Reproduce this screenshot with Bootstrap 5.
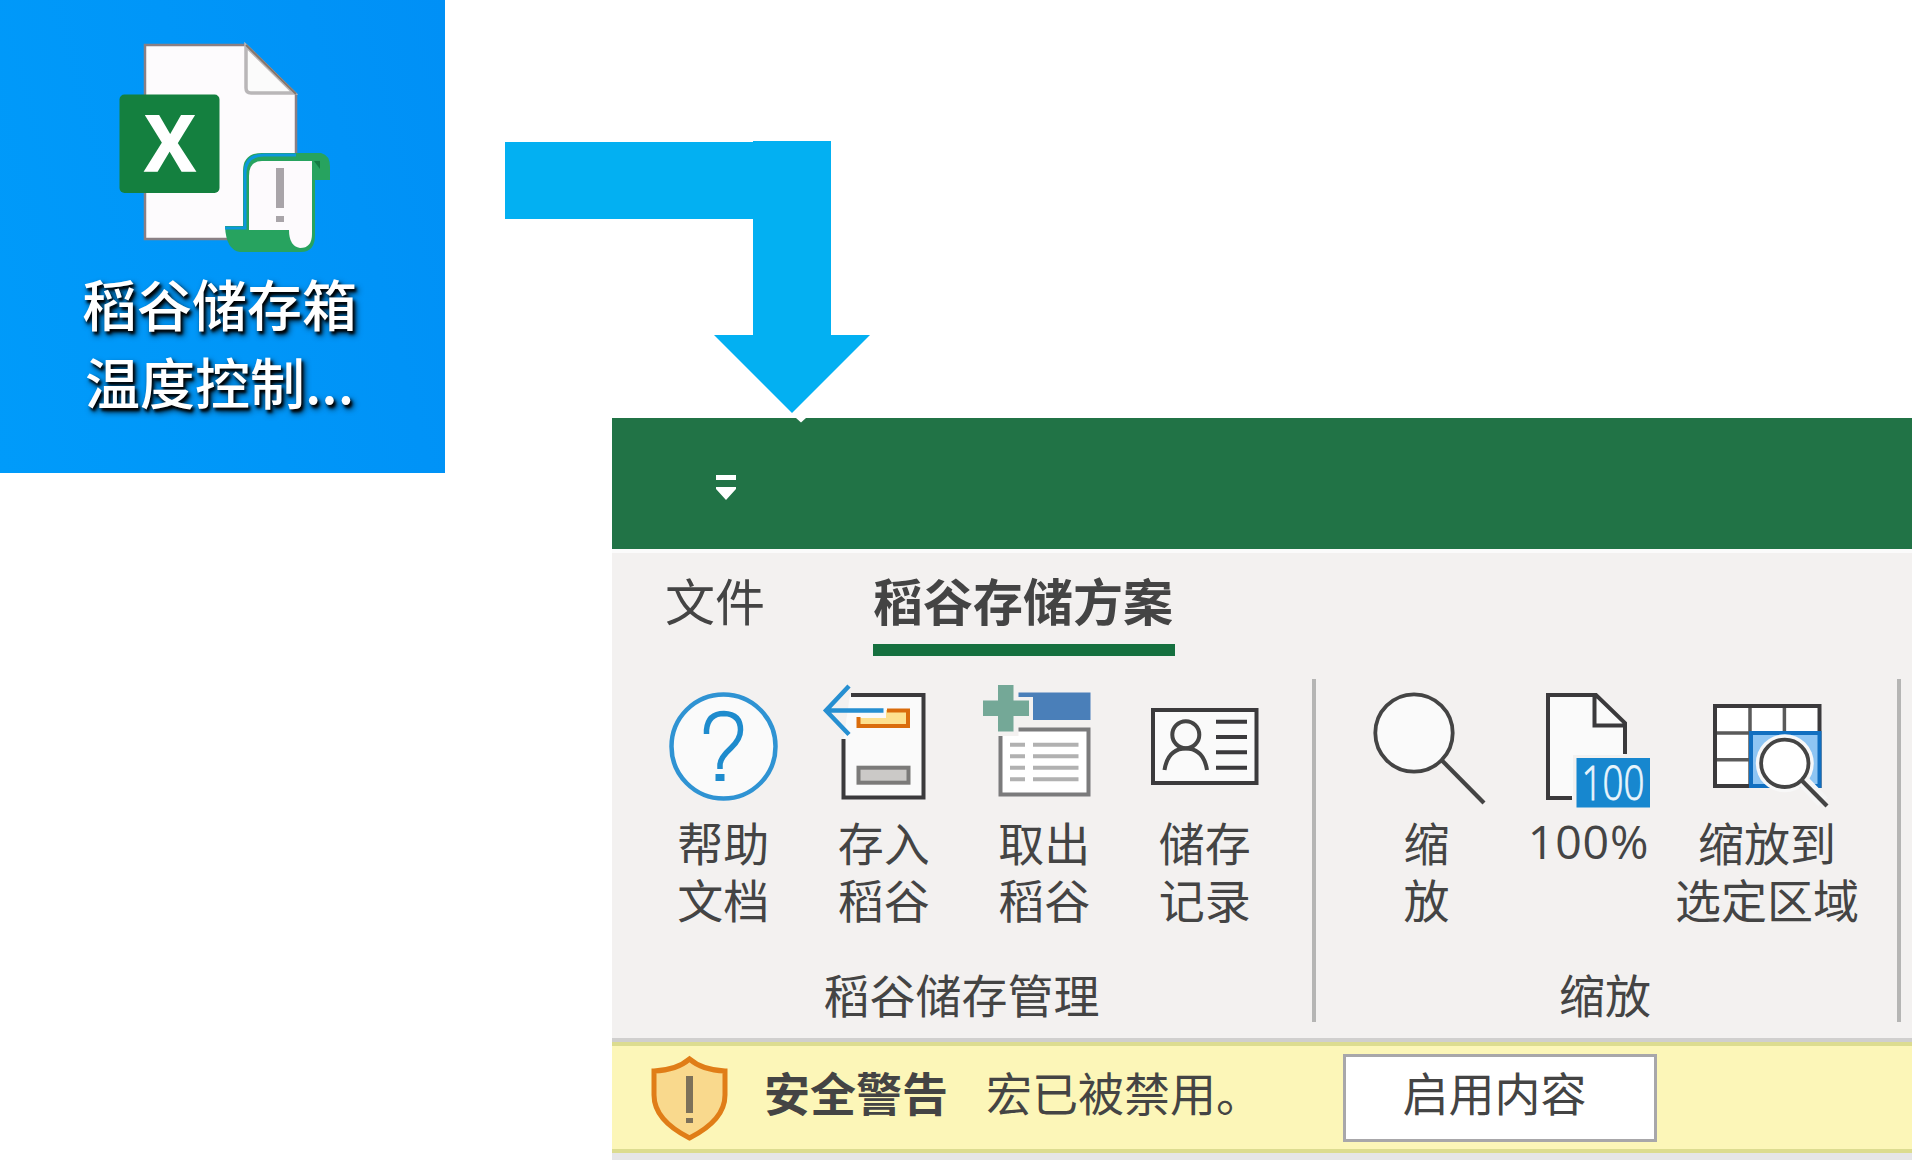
<!DOCTYPE html>
<html lang="zh-CN">
<head>
<meta charset="utf-8">
<title>稻谷存储方案</title>
<link rel="stylesheet" href="https://cdn.jsdelivr.net/npm/bootstrap@5.3.0/dist/css/bootstrap.min.css">
<style>
body{width:1915px;height:1164px;background:#fff;font-family:"Noto Sans CJK SC",sans-serif;color:#444}
.desk-tile{width:445px;height:473px;background:linear-gradient(75deg,#009bfa,#0096f8 50%,#0090f6);padding-top:30px}
.desk-name{font-size:55px;line-height:78px;font-weight:500;color:#fff;margin-top:-7px;padding-right:6px;text-shadow:2px 3px 3px #000,3px 4px 6px rgba(0,0,0,.8)}
.arrow-art{margin:141px 0 0 60px}
.app-win{width:1300px;height:742px;margin:-55px 0 0 612px;background:#f3f1f0}
.app-title{height:131px;background:#217346;padding:57px 0 0 103px;position:relative}
.app-notch{position:absolute;left:183px;top:0}
.tab-strip{height:126px;border-top:4px solid #fbfbfb;padding-left:53px}
.tab-item{font-size:50px;line-height:60px;height:103px;padding-top:16px}
.tab-gap{margin-left:108px;width:302px}
.tab-on{font-weight:700;border-bottom:12px solid #15703f;white-space:nowrap}
.rib{height:367px}
.grp{height:343px;margin-top:4px}
.grp-a{width:700px;padding-left:31px}
.grp-b{width:581px;padding-left:29px}
.rule-v{width:4px;height:343px;margin-top:4px;background:#b5b5b4}
.rib-btn{font-size:46px;line-height:57px;height:261px;width:160.5px;padding-top:1px;color:#444;white-space:nowrap}
.rib-btn svg,.desk-tile svg,.msg-bar svg{overflow:visible}
.rib-btn svg{margin-bottom:3px}
.w-z{width:163px}.w-s{width:192px}
.grp-name{font-size:46px;line-height:57px;margin-top:25px}
.pct{font-family:"Open Sans","Noto Sans",sans-serif;font-size:46.5px;letter-spacing:.8px;padding-right:2px}
.msg-bar{height:111px;border-top:4px solid #dcdc90;border-bottom:4px solid #dcdc90;background:#fcf6b8;box-shadow:0 -4px 0 #d0cfce;font-size:46px;line-height:57px;padding-left:39px}
.msg-b{margin-left:36px;padding-bottom:13px;font-weight:700}
.msg-t{margin-left:38px;padding-bottom:13px;width:357px}
.msg-btn{width:314px;height:88px;border:3px solid #a8a7aa;font-size:46px;line-height:57px;color:#444;padding:0 11px 13px 0}
.win-foot{height:7px;background:#e6e6e8}
</style>
<script src="https://cdn.jsdelivr.net/npm/bootstrap@5.3.0/dist/js/bootstrap.bundle.min.js"></script>
</head>
<body class="overflow-hidden m-0">
<div class="d-flex align-items-start">
  <div class="desk-tile text-center">
    <svg class="d-block" width="445" height="240" viewBox="0 30 445 240">
      <path d="M145 45H246L296 94V239H145Z" fill="#fdfbfd" stroke="#8a7f84" stroke-width="2.5"/>
      <path d="M246 46V88Q246 93 251 93H294Z" fill="#fbfbfb" stroke="#b9b6b8" stroke-width="3.5"/>
      <path d="M246 45L296 94" stroke="#85766c" stroke-width="2"/>
      <rect x="119.500" y="94.500" width="100" height="98.500" rx="5" fill="#14803f"/>
      <text x="170" y="171" text-anchor="middle" font-family="Open Sans,sans-serif" font-weight="700" font-size="77" textLength="50" lengthAdjust="spacingAndGlyphs" fill="#fff" stroke="#fff" stroke-width="1.500">X</text>
      <path d="M225 226H243V171Q243 153 262 153H321Q330 155 330 167V180H315V235Q315 252 301 252H240Q226 250 225 226Z" fill="#27a35f"/>
      <path d="M225 228H245V172Q246 155 264 155H296" fill="none" stroke="#0c98dc" stroke-width="3"/>
      <path d="M249 230V176Q249 161 262 161H312V234Q312 248 300 248Q289 246 289 230Z" fill="#fdfafd"/>
      <path d="M280 168V208M280 216V222" stroke="#a9a4a9" stroke-width="8"/>
      <path d="M314 161H320V169Z" fill="#147c43"/>
    </svg>
    <div class="desk-name">稻谷储存箱<br>温度控制...</div>
  </div>
  <svg class="arrow-art" width="365" height="273"><path d="M0 1H248V0H326V194H365L287 272L209 194H248V78H0Z" fill="#03b0f2"/></svg>
</div>
<main class="app-win">
  <div class="app-title">
    <svg class="app-notch" width="12" height="5"><path d="M1 0H11L6 4.500Z" fill="#fff"/></svg>
    <svg class="d-block" width="22" height="26"><path d="M1 0H21V5H1ZM1 12H21V14L11 25L1 14Z" fill="#fff"/></svg>
  </div>
  <nav class="tab-strip d-flex">
    <div class="tab-item">文件</div>
    <div class="tab-item tab-gap tab-on">稻谷存储方案</div>
  </nav>
  <div class="rib d-flex">
    <section class="grp grp-a">
      <div class="d-flex">
        <div class="rib-btn d-flex flex-column align-items-center text-center">
          <svg width="120" height="130"><circle cx="60.500" cy="66.500" r="52" fill="#fafafa" stroke="#2f93d3" stroke-width="4.500"/><path d="M43.500 54V50Q45 33.500 61 33.500Q77.500 34 77.500 50Q77.500 59 68 68Q57 78 57 85V89" fill="none" stroke="#1e8bcd" stroke-width="5.500"/><rect x="52.500" y="94" width="9" height="7" fill="#1e8bcd"/></svg>
          <div>帮助<br>文档</div>
        </div>
        <div class="rib-btn d-flex flex-column align-items-center text-center">
          <svg width="120" height="130" viewBox="1 1 120 130"><path d="M27 16H100.500V119H20.500V60Z" fill="#fafafa"/><path d="M28 16H100.500V118.500H20.500V60" fill="none" stroke="#3b3a3c" stroke-width="4"/><path d="M35 39H63V31H85V47H35Z" fill="#fde08e"/><path d="M64 31.500H85V47H35.500V38" fill="none" stroke="#da6c0c" stroke-width="4"/><rect x="35.500" y="88.700" width="50" height="15" fill="#cbc9c7" stroke="#7b7a79" stroke-width="4"/><path d="M26 7L3 31.500L26 55.500M3 31.500H60.500" fill="none" stroke="#268fd1" stroke-width="4.500"/></svg>
          <div>存入<br>稻谷</div>
        </div>
        <div class="rib-btn d-flex flex-column align-items-center text-center">
          <svg width="120" height="130" viewBox="-.5 1 120 130"><path d="M34 50.500H104V115.500H16V57H34Z" fill="#fff"/><path d="M34 50.500H104V115.500H16V57" fill="none" stroke="#7b7b7c" stroke-width="4"/><path d="M34 13.500H106V41H48.500V18H34Z" fill="#4a7fb9"/><path d="M13.500 6H29V21.500H44.500V37H29V52.500H13.500V37H-1.500V21.500H13.500Z" fill="#74a897"/><path d="M25.500 65.700H40.500M48.500 65.700H94M25.500 77.300H40.500M48.500 77.300H94M25.500 88.700H40.500M48.500 88.700H94M25.500 100.300H40.500M48.500 100.300H94" stroke="#b1b1b1" stroke-width="4"/></svg>
          <div>取出<br>稻谷</div>
        </div>
        <div class="rib-btn d-flex flex-column align-items-center text-center">
          <svg width="120" height="130" viewBox="0 1 120 130"><rect x="8" y="31" width="103.500" height="73" fill="#fafafa" stroke="#3b3a3c" stroke-width="4"/><circle cx="40.800" cy="55.700" r="13.500" fill="none" stroke="#444" stroke-width="4"/><path d="M19.500 91Q23 69.500 40.800 69.500Q58.500 69.500 62 91" fill="none" stroke="#444" stroke-width="4"/><path d="M71 42.700H102M71 58H102M71 73.300H102M71 88.700H102" stroke="#3b3a3c" stroke-width="4"/></svg>
          <div>储存<br>记录</div>
        </div>
      </div>
      <div class="grp-name text-center me-4 pe-2">稻谷储存管理</div>
    </section>
    <div class="rule-v"></div>
    <section class="grp grp-b">
      <div class="d-flex">
        <div class="rib-btn w-z d-flex flex-column align-items-center text-center">
          <svg width="120" height="130" viewBox="0 1 120 130"><circle cx="47" cy="54" r="38.700" fill="#fafafa" stroke="#444" stroke-width="3.800"/><path d="M74.500 81L117 124" stroke="#444" stroke-width="4.200"/></svg>
          <div>缩<br>放</div>
        </div>
        <div class="rib-btn w-z d-flex flex-column align-items-center text-center">
          <svg width="120" height="130" viewBox="0 1 120 130"><path d="M18 16H66L95 44V119H18Z" fill="#fafafa"/><path d="M42 119H18V16H66L95 44V75M64.500 16V46.500H95" fill="none" stroke="#3b3a3c" stroke-width="4"/><rect x="43" y="76" width="80" height="55" fill="#f3f1f0"/><rect x="46.500" y="79" width="73.500" height="49.500" fill="#1787cf"/><text x="83" y="121" text-anchor="middle" font-family="Open Sans,sans-serif" font-weight="300" font-size="47" textLength="63" lengthAdjust="spacingAndGlyphs" fill="#e9f5fc" stroke="#e9f5fc" stroke-width=".8">100</text></svg>
          <div class="pct">100%</div>
        </div>
        <div class="rib-btn w-s d-flex flex-column align-items-center text-center">
          <svg width="120" height="130" viewBox="0 1 120 130"><rect x="8" y="27" width="104.500" height="80" fill="#fff"/><path d="M43 27V107M77.400 27V54M8 54H112M8 80.700H43" stroke="#5a5a5a" stroke-width="3.500"/><rect x="8" y="27" width="104.500" height="80" fill="none" stroke="#3b3a3c" stroke-width="4"/><rect x="44" y="54" width="68.500" height="53" fill="#8ec5f3" stroke="#116fc0" stroke-width="4"/><circle cx="77.800" cy="84.300" r="29" fill="#f8f8f8"/><path d="M92 98L116 123" stroke="#f5f5f5" stroke-width="13"/><circle cx="77.800" cy="84.300" r="23.700" fill="#fff" stroke="#444" stroke-width="3.800"/><path d="M95 101.700L120 127" stroke="#444" stroke-width="4.200"/></svg>
          <div>缩放到<br>选定区域</div>
        </div>
      </div>
      <div class="grp-name text-center me-4 pe-2">缩放</div>
    </section>
    <div class="rule-v"></div>
  </div>
  <div class="msg-bar d-flex align-items-center">
    <svg width="77" height="85"><path d="M38.500 4Q51 15 74 16V40Q74 65 38.500 83Q3 65 3 40V16Q26 15 38.500 4Z" fill="#f9d98d" stroke="#e07d17" stroke-width="5"/><path d="M38.500 21V58M38.500 63V68" stroke="#7d7159" stroke-width="7"/></svg>
    <div class="msg-b">安全警告</div>
    <div class="msg-t">宏已被禁用。</div>
    <button class="msg-btn btn bg-white rounded-0">启用内容</button>
  </div>
  <div class="win-foot"></div>
</main>
</body>
</html>
